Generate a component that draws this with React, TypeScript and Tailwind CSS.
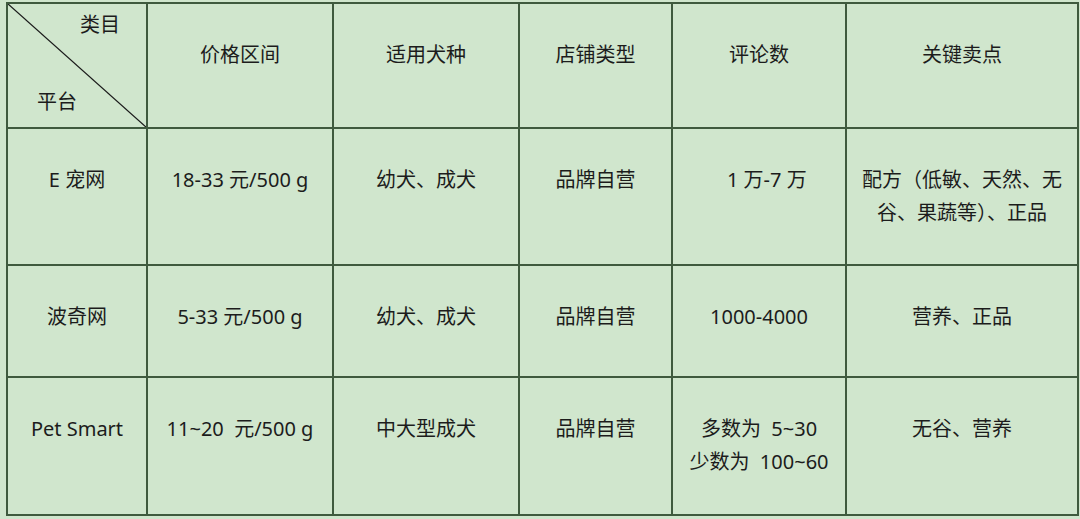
const rows = [
  { name: "E 宠网", price: "18-33 元/500 g", dog: "幼犬、成犬", shop: "品牌自营", reviews: ["   1 万-7 万"], points: ["配方（低敏、天然、无", "谷、果蔬等）、正品"], h: "h-[137px]" },
  { name: "波奇网", price: "5-33 元/500 g", dog: "幼犬、成犬", shop: "品牌自营", reviews: ["1000-4000"], points: ["营养、正品"], h: "h-[112px]" },
  { name: "Pet Smart", price: "11~20  元/500 g", dog: "中大型成犬", shop: "品牌自营", reviews: ["多数为  5~30", "少数为  100~60"], points: ["无谷、营养"], h: "h-[138px]" },
];

const cell = "border-2 border-[#3f5a3e] align-top text-center pt-[34px] leading-[33px] whitespace-pre";

export default function App() {
  return (
    <div className="w-[1080px] h-[519px] bg-[#d0e6cd] pt-[2px] pl-[6px] text-[20px] text-[#1c1c1c] font-['Noto_Sans','Noto_Sans_CJK_SC',sans-serif]">
      <table className="table-fixed border-collapse w-[1071px]">
        <colgroup>
          <col className="w-[140px]" />
          <col className="w-[186px]" />
          <col className="w-[186px]" />
          <col className="w-[153px]" />
          <col className="w-[174px]" />
          <col className="w-[232px]" />
        </colgroup>
        <tbody>
          <tr className="h-[125px]">
            <td className="border-2 border-[#3f5a3e] p-0 relative">
              <svg className="absolute inset-0 w-full h-full" viewBox="0 0 100 100" preserveAspectRatio="none">
                <line x1="0" y1="0" x2="100" y2="100" stroke="#1a1a1a" strokeWidth="1.3" vectorEffect="non-scaling-stroke" />
              </svg>
              <span className="absolute left-[72px] top-[4px] leading-[33px]">类目</span>
              <span className="absolute left-[29px] top-[81px] leading-[33px]">平台</span>
            </td>
            <td className={cell}>价格区间</td>
            <td className={cell}>适用犬种</td>
            <td className={cell}>店铺类型</td>
            <td className={cell}>评论数</td>
            <td className={cell}>关键卖点</td>
          </tr>
          {rows.map((r) => (
            <tr key={r.name} className={r.h}>
              <td className={cell}>{r.name}</td>
              <td className={cell}>{r.price}</td>
              <td className={cell}>{r.dog}</td>
              <td className={cell}>{r.shop}</td>
              <td className={cell}>
                {r.reviews.map((t) => (
                  <div key={t}>{t}</div>
                ))}
              </td>
              <td className={cell}>
                {r.points.map((t) => (
                  <div key={t}>{t}</div>
                ))}
              </td>
            </tr>
          ))}
        </tbody>
      </table>
    </div>
  );
}
